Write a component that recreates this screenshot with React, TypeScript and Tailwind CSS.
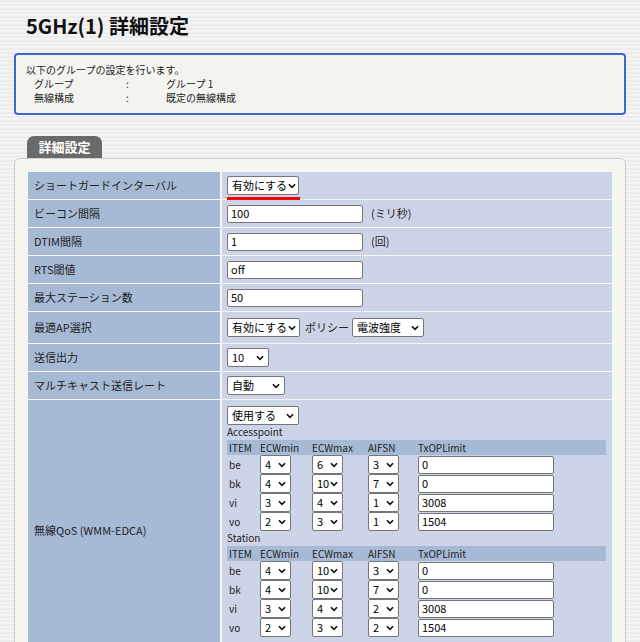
const font = { fontFamily: '"Noto Sans CJK JP", "Liberation Sans", sans-serif' };

function Chev() {
  return (
    <svg width="9" height="6" viewBox="0 0 9 6" className="ml-auto shrink-0 pl-[1px]">
      <path d="M1 1l3.5 3.5L8 1" fill="none" stroke="#111" strokeWidth="1.8" />
    </svg>
  );
}

function Sel({ v, w }: { v: string; w: string }) {
  return (
    <div className={`${w} h-[19px] bg-white border border-[#767676] rounded-[2px] flex items-center pl-[4px] pr-[4px] text-[11px] leading-none text-black whitespace-nowrap overflow-hidden`}>
      <span>{v}</span>
      <Chev />
    </div>
  );
}

function Inp({ v, w }: { v: string; w: string }) {
  return (
    <div className={`${w} h-[18px] bg-white border border-[#767676] rounded-[2px] flex items-center px-[3px] text-[11px] leading-none text-black`}>{v}</div>
  );
}

function Row({ label, h = 'h-[27px]', children }: { label: string; h?: string; children: React.ReactNode }) {
  return (
    <div className="flex gap-[2px] mt-[1px]">
      <div className={`w-[192px] ${h} bg-[#a6bad6] flex items-center pl-[6px] text-[11px] text-[#222]`}>{label}</div>
      <div className={`flex-1 ${h} bg-[#cdd4e7] flex items-center pl-[5px] gap-[8px] text-[11px] text-[#222]`}>{children}</div>
    </div>
  );
}

const ap = [
  ['be', '4', '6', '3', '0'],
  ['bk', '4', '10', '7', '0'],
  ['vi', '3', '4', '1', '3008'],
  ['vo', '2', '3', '1', '1504'],
];
const st = [
  ['be', '4', '10', '3', '0'],
  ['bk', '4', '10', '7', '0'],
  ['vi', '3', '4', '2', '3008'],
  ['vo', '2', '3', '2', '1504'],
];

function QosTable({ title, rows }: { title: string; rows: string[][] }) {
  return (
    <div>
      <div className="h-[14px] leading-[14px]">{title}</div>
      <div className="flex h-[15px] bg-[#a6bad6] items-center mt-[1px]">
        <div className="w-[33px] pl-[2px]">ITEM</div>
        <div className="w-[52px]">ECWmin</div>
        <div className="w-[56px]">ECWmax</div>
        <div className="w-[50px]">AIFSN</div>
        <div>TxOPLimit</div>
      </div>
      {rows.map((r) => (
        <div key={r[0]} className="flex h-[19px] items-center">
          <div className="w-[33px] pl-[2px]">{r[0]}</div>
          <div className="w-[52px]"><Sel v={r[1]} w="w-[31px]" /></div>
          <div className="w-[56px]"><Sel v={r[2]} w="w-[31px]" /></div>
          <div className="w-[50px]"><Sel v={r[3]} w="w-[31px]" /></div>
          <Inp v={r[4]} w="w-[136px]" />
        </div>
      ))}
    </div>
  );
}

export default function App() {
  return (
    <div style={font} className="w-[640px] h-[642px] overflow-hidden bg-[repeating-linear-gradient(0deg,#ececec_0px,#ececec_2px,#f3f3f3_2px,#f3f3f3_4px)]">
      <h1 className="pl-[26px] pt-[12px] text-[20px] font-bold text-[#111] h-[44px] leading-[28px]">5GHz(1) 詳細設定</h1>
      <div className="mx-[14px] mt-[9px] h-[62px] border-2 border-[#3a6cc6] rounded-[4px] bg-[#f4f4ee] pl-[10px] pt-[8px] text-[10px] leading-[14px] text-[#222]">
        <div>以下のグループの設定を行います。</div>
        <div className="flex pl-[8px]"><span className="w-[92px]">グループ</span><span className="w-[40px]">:</span><span>グループ 1</span></div>
        <div className="flex pl-[8px]"><span className="w-[92px]">無線構成</span><span className="w-[40px]">:</span><span>既定の無線構成</span></div>
      </div>
      <div className="ml-[27px] mt-[21px] w-[75px] h-[22px] bg-[#6a6a6a] rounded-t-[7px] text-white font-bold text-[13px] flex items-center justify-center">詳細設定</div>
      <div className="mx-[14px] bg-[#f6f6f0] border border-[#cfcfcf] rounded-[6px] px-[13px] pt-[12px] h-[500px]">
        <Row label="ショートガードインターバル">
          <div className="relative">
            <Sel v="有効にする" w="w-[72px]" />
            <div className="absolute left-0 -bottom-[5px] w-[73px] h-[3px] bg-[#f00]" />
          </div>
        </Row>
        <Row label="ビーコン間隔"><Inp v="100" w="w-[136px]" /><span>(ミリ秒)</span></Row>
        <Row label="DTIM間隔"><Inp v="1" w="w-[136px]" /><span>(回)</span></Row>
        <Row label="RTS閾値"><Inp v="off" w="w-[136px]" /></Row>
        <Row label="最大ステーション数"><Inp v="50" w="w-[136px]" /></Row>
        <Row label="最適AP選択" h="h-[31px]">
          <Sel v="有効にする" w="w-[73px]" />
          <span className="-ml-[3px]">ポリシー</span>
          <Sel v="電波強度" w="w-[72px] -ml-[5px]" />
        </Row>
        <Row label="送信出力"><Sel v="10" w="w-[42px]" /></Row>
        <Row label="マルチキャスト送信レート"><Sel v="自動" w="w-[58px]" /></Row>
        <div className="flex gap-[2px] mt-[1px]">
          <div className="w-[192px] h-[260px] bg-[#a6bad6] flex items-center pl-[6px] text-[11px] text-[#222]">無線QoS (WMM-EDCA)</div>
          <div className="flex-1 h-[260px] bg-[#cdd4e7] pl-[5px] pt-[6px] text-[10px] text-[#222]">
            <Sel v="使用する" w="w-[72px]" />
            <div className="pr-[6px]">
              <QosTable title="Accesspoint" rows={ap} />
              <QosTable title="Station" rows={st} />
            </div>
          </div>
        </div>
      </div>
    </div>
  );
}
